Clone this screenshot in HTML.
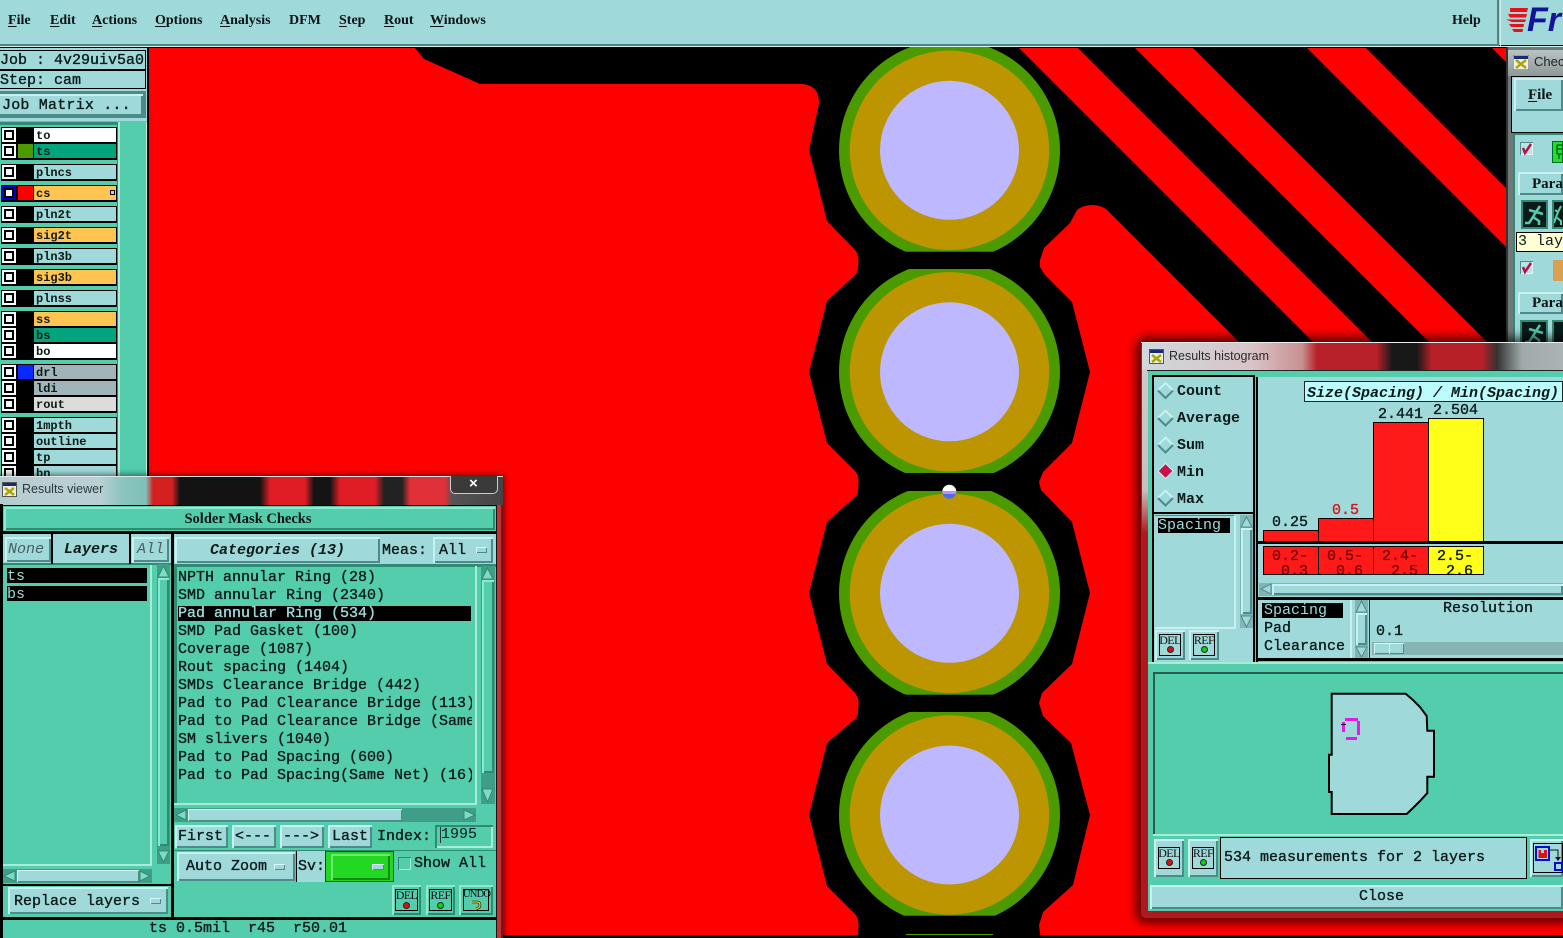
<!DOCTYPE html>
<html><head><meta charset="utf-8"><title>Solder Mask Checks</title>
<style>
*,*:after{box-sizing:border-box}
html,body{margin:0;padding:0;width:1563px;height:938px;overflow:hidden;background:#000}
div,span,svg.a{position:absolute}
.t{font:15px/16px "Liberation Mono",monospace;white-space:pre;color:#0a1a1a;-webkit-text-stroke:.35px currentColor;margin-top:1px}
.m{font:bold 14px/16px "Liberation Serif",serif;color:#0b1414;white-space:pre}
.m u{text-underline-offset:2px}
.s{font:bold 12px/14px "Liberation Mono",monospace;color:#0c1a14;white-space:pre;top:1px}
.b{background:#a0d9da;box-shadow:inset 2px 2px 0 #c8f2f1,inset -2px -2px 0 #4f8a8a}
.g{background:#54cdad;box-shadow:inset 2px 2px 0 #8fe8d0,inset -2px -2px 0 #2f8a72}
.l{background:#a0d9da}
.k{background:#000}
.r{left:1px;width:116px;height:16px;background:#000}
.c{left:1px;top:1px;width:14px;height:14px;background:#fff}
.c:after{content:"";position:absolute;left:2px;top:2px;width:10px;height:10px;border:2px solid #000;background:#f0f8f8}
.w{left:17px;top:0;width:15px;height:16px}
.n{left:33px;top:1px;width:82px;height:14px;background:#a0d9da;padding-left:2px;position:absolute}
.o{background:#ffc550}.v{background:#00a57e}.h{background:#fff}.y{background:#a0b4ba}.e{background:#dcdcdc}
.ib{font:12px/12px "Liberation Serif",serif;color:#111;text-align:center;letter-spacing:-.6px}
.dot{width:7px;height:7px;border-radius:50%;border:1px solid #222}
.f{border:1px solid #000}
</style></head><body>

<!-- PCB canvas -->
<svg class="a" style="left:0;top:0" width="1563" height="938" viewBox="0 0 1563 938">
<rect width="1563" height="938" fill="#000"/>
<path fill="#f00" d="M149 48L415 48L424 59L480 84L800 84Q819 84 819 103L809 150L827 221L855 250Q859 255 858.500 262L858 268Q858 272 855 275L827 301L809 372L827 443L855 471Q859 476 858.500 482L858 490Q858 494 855 497L827 522L809 593L827 664L855 693Q859 698 858.500 704L858 712Q858 716 855 719L827 743L809 815L827 886L855 914Q859 919 858.500 926L858 935L149 935Z"/>
<path fill="#f00" d="M1040 260L1044 248L1070 223L1077 210Q1083 205 1092 205Q1101 205 1107 210L1563 666L1563 935L1040 935L1039 925L1043 912L1073 885L1090 815L1071 743L1043 716L1039 703L1042 693L1072 664L1090 593L1072 522L1041 490L1039 482L1043 472L1072 443L1090 372L1072 302L1045 275L1040 267Z"/>
<path fill="#f00" d="M1019 48H1078L1507 477V536ZM1135 48H1193L1507 362V420ZM1307 48H1366L1507 189V248ZM1492 48H1507V63Z"/>
<g>
<circle cx="949.500" cy="150.300" r="110.500" fill="#4a9a00"/><circle cx="949.500" cy="371.800" r="110.500" fill="#4a9a00"/><circle cx="949.500" cy="593.300" r="110.500" fill="#4a9a00"/><circle cx="949.500" cy="815" r="110.500" fill="#4a9a00"/>
<rect x="895" y="251.700" width="110" height="17.300" fill="#000"/><rect x="895" y="473" width="110" height="18" fill="#000"/><rect x="895" y="694.700" width="110" height="17.300" fill="#000"/><rect x="895" y="915.700" width="110" height="19" fill="#000"/>
<circle cx="949.500" cy="150.300" r="99.700" fill="#bd9500"/><circle cx="949.500" cy="371.800" r="99.700" fill="#bd9500"/><circle cx="949.500" cy="593.300" r="99.700" fill="#bd9500"/><circle cx="949.500" cy="815" r="99.700" fill="#bd9500"/>
<circle cx="949.500" cy="150.300" r="69.500" fill="#bdb8ff"/><circle cx="949.500" cy="371.800" r="69.500" fill="#bdb8ff"/><circle cx="949.500" cy="593.300" r="69.500" fill="#bdb8ff"/><circle cx="949.500" cy="815" r="69.500" fill="#bdb8ff"/>
<rect x="906" y="934" width="87" height="1" fill="#4a9a00"/>
<rect x="0" y="935" width="1563" height="3" fill="#000"/>
</g>
<clipPath id="cur"><circle cx="949.300" cy="491.700" r="7"/></clipPath>
<g clip-path="url(#cur)"><rect x="940" y="484" width="20" height="7" fill="#fff"/><rect x="940" y="491" width="20" height="3" fill="#c58cf5"/><rect x="940" y="494" width="20" height="6" fill="#4a6cf0"/></g>
</svg>

<!-- Top bar -->
<div class="l" style="left:0;top:0;width:1563px;height:45px"></div>
<div style="left:0;top:44px;width:1498px;height:2px;background:#4d8484"></div>
<div style="left:0;top:46px;width:1563px;height:1px;background:#d0f0f0"></div>
<div style="left:1497px;top:0;width:2px;height:46px;background:#4d8484"></div>
<div style="left:1500px;top:0;width:1px;height:46px;background:#d0f0f0"></div>
<span class="m" style="left:8px;top:13px"><u>F</u>ile</span>
<span class="m" style="left:50px;top:13px"><u>E</u>dit</span>
<span class="m" style="left:92px;top:13px"><u>A</u>ctions</span>
<span class="m" style="left:155px;top:13px"><u>O</u>ptions</span>
<span class="m" style="left:220px;top:13px"><u>A</u>nalysis</span>
<span class="m" style="left:289px;top:13px">DFM</span>
<span class="m" style="left:339px;top:13px"><u>S</u>tep</span>
<span class="m" style="left:384px;top:13px"><u>R</u>out</span>
<span class="m" style="left:430px;top:13px"><u>W</u>indows</span>
<span class="m" style="left:1452px;top:13px">Help</span>
<svg class="a" style="left:1504px;top:6px" width="26" height="26"><g fill="#e8101a"><path d="M6 2H24L23 6H6ZM4 8H23L22 11.500H6ZM2 13.500H22L21 16H8ZM5 18H20L19.500 21H7ZM8 23H19L18.500 26H10Z"/></g></svg>
<span style="left:1527px;top:1px;font:italic bold 34px/38px 'Liberation Sans',sans-serif;color:#14149a;white-space:pre">Fr</span>

<!-- Left panel -->
<div class="l" style="left:0;top:48px;width:149px;height:430px"></div>
<div class="k" style="left:147px;top:48px;width:2px;height:430px"></div>
<div class="f l" style="left:-1px;top:50px;width:147px;height:20px"></div>
<div class="f l" style="left:-1px;top:70px;width:147px;height:19px"></div>
<span class="t" style="left:0;top:52px">Job : 4v29uiv5a0</span>
<span class="t" style="left:0;top:72px">Step: cam</span>
<div style="left:0;top:91px;width:146px;height:27px;background:#4d8a8a"></div>
<div class="b" style="left:-2px;top:94px;width:145px;height:22px"></div>
<span class="t" style="left:2px;top:97px;letter-spacing:.2px">Job Matrix ...</span>

<div style="left:0;top:121px;width:147px;height:360px;background:#54cdad"></div>
<div style="left:118px;top:122px;width:2px;height:355px;background:#a8ecd8"></div>
<div style="left:146px;top:122px;width:1px;height:355px;background:#c0f5e8"></div>
<div style="left:0;top:122px;width:118px;height:355px;background:#2f8a72"></div>
<div style="left:0;top:125px;width:117px;height:350px;background:#54cdad"></div>

<div class="r" style="top:127px"><i class="c" style="position:absolute"></i><div class="n h"><span class="s">to</span></div></div>
<div class="r" style="top:143px;height:17px"><i class="c" style="position:absolute"></i><div class="w" style="background:#4a9a00;top:1px;height:14px"></div><div class="n v"><span class="s">ts</span></div></div>
<div class="r" style="top:164px;height:17px"><i class="c" style="position:absolute"></i><div class="n"><span class="s">plncs</span></div></div>
<div class="r" style="top:185px;height:17px"><i class="c" style="position:absolute;background:#0000c8"></i><div class="w" style="background:#f00;top:1px;height:14px"></div><div class="n o"><span class="s">cs</span><span style="left:76px;top:4px;width:5px;height:5px;border:1px solid #000;background:#ccc"></span></div></div>
<div class="r" style="top:206px;height:17px"><i class="c" style="position:absolute"></i><div class="n"><span class="s">pln2t</span></div></div>
<div class="r" style="top:227px;height:17px"><i class="c" style="position:absolute"></i><div class="n o"><span class="s">sig2t</span></div></div>
<div class="r" style="top:248px;height:17px"><i class="c" style="position:absolute"></i><div class="n"><span class="s">pln3b</span></div></div>
<div class="r" style="top:269px;height:17px"><i class="c" style="position:absolute"></i><div class="n o"><span class="s">sig3b</span></div></div>
<div class="r" style="top:290px;height:17px"><i class="c" style="position:absolute"></i><div class="n"><span class="s">plnss</span></div></div>
<div class="r" style="top:311px;height:17px"><i class="c" style="position:absolute"></i><div class="n o"><span class="s">ss</span></div></div>
<div class="r" style="top:327px;height:17px"><i class="c" style="position:absolute"></i><div class="n v"><span class="s">bs</span></div></div>
<div class="r" style="top:343px;height:17px"><i class="c" style="position:absolute"></i><div class="n h"><span class="s">bo</span></div></div>
<div class="r" style="top:364px;height:17px"><i class="c" style="position:absolute"></i><div class="w" style="background:#0a28ff;top:1px;height:14px"></div><div class="n y"><span class="s">drl</span></div></div>
<div class="r" style="top:380px;height:17px"><i class="c" style="position:absolute"></i><div class="n y"><span class="s">ldi</span></div></div>
<div class="r" style="top:396px;height:17px"><i class="c" style="position:absolute"></i><div class="n e"><span class="s">rout</span></div></div>
<div class="r" style="top:417px;height:17px"><i class="c" style="position:absolute"></i><div class="n"><span class="s">1mpth</span></div></div>
<div class="r" style="top:433px;height:17px"><i class="c" style="position:absolute"></i><div class="n"><span class="s">outline</span></div></div>
<div class="r" style="top:449px;height:17px"><i class="c" style="position:absolute"></i><div class="n"><span class="s">tp</span></div></div>
<div class="r" style="top:465px;height:17px"><i class="c" style="position:absolute"></i><div class="n"><span class="s">bn</span></div></div>

<!-- Check window (right edge) -->
<div style="left:1506px;top:47px;width:57px;height:296px;background:#6e7a7a"></div>
<div style="left:1506px;top:47px;width:2px;height:296px;background:#333"></div>
<div style="left:1508px;top:50px;width:55px;height:26px;background:linear-gradient(#b9c3c3,#8d9999)"></div>
<svg class="a" style="left:1513px;top:55px" width="16" height="15"><rect width="16" height="15" fill="#eee" stroke="#555"/><rect x="1" y="1" width="14" height="3" fill="#1a2a7a"/><path d="M3 5L13 13M13 5L3 13" stroke="#a8a800" stroke-width="2.500"/></svg>
<span style="left:1534px;top:53px;font:13px/17px 'Liberation Sans',sans-serif;color:#222">Chec</span>
<div class="k" style="left:1511px;top:76px;width:52px;height:57px"></div>
<div class="l" style="left:1512px;top:77px;width:51px;height:55px"></div>
<div class="b" style="left:1514px;top:78px;width:49px;height:33px"></div>
<span class="m" style="left:1528px;top:87px;font-size:15px"><u>F</u>ile</span>
<div style="left:1513px;top:133px;width:50px;height:210px;background:#a0d9da"></div>
<div style="left:1513px;top:133px;width:2px;height:210px;background:#2f8a72"></div>
<div style="left:1513px;top:133px;width:50px;height:2px;background:#2f8a72"></div>
<div class="b" style="left:1520px;top:142px;width:13px;height:13px;background:#b8e6e6;box-shadow:inset 1px 1px 0 #4f8a8a,inset -1px -1px 0 #e0f8f8"></div>
<svg class="a" style="left:1520px;top:142px" width="14" height="14"><path d="M3 6L5 11L11 2" stroke="#b8104c" stroke-width="2.500" fill="none"/></svg>
<div style="left:1552px;top:141px;width:11px;height:22px;background:#22e022;border:1px solid #063"></div>
<svg class="a" style="left:1553px;top:142px" width="10" height="20"><path d="M4 3H9M4 3V12M4 7H9M4 12H9M6 12V17" stroke="#063" stroke-width="1.500" fill="none"/></svg>
<div class="b" style="left:1518px;top:172px;width:45px;height:23px"></div>
<span class="m" style="left:1532px;top:176px;font-size:15px">Paran</span>
<div style="left:1521px;top:200px;width:27px;height:29px;background:#0a1a1a;border:2px solid #2f8a72"></div>
<div style="left:1552px;top:200px;width:11px;height:29px;background:#0a1a1a;border:2px solid #2f8a72;border-right:0"></div>
<svg class="a" style="left:1523px;top:203px" width="24" height="24"><path d="M17 3L13 9L6 7M13 9L10 14L16 18L16 22M10 14L6 20H2M13 9L20 11" stroke="#54cdad" stroke-width="2.500" fill="none"/></svg>
<svg class="a" style="left:1554px;top:203px" width="9" height="24"><path d="M7 3L4 9L1 7M4 9L2 14L7 18L7 22M2 14L0 20" stroke="#54cdad" stroke-width="2" fill="none"/></svg>
<div style="left:1516px;top:232px;width:47px;height:20px;background:#ffffd4;border:1px solid #000;border-right:0"></div>
<span class="t" style="left:1518px;top:233px;-webkit-text-stroke:0">3 lay</span>
<div class="b" style="left:1520px;top:261px;width:13px;height:13px;background:#b8e6e6;box-shadow:inset 1px 1px 0 #4f8a8a,inset -1px -1px 0 #e0f8f8"></div>
<svg class="a" style="left:1520px;top:261px" width="14" height="14"><path d="M3 6L5 11L11 2" stroke="#b8104c" stroke-width="2.500" fill="none"/></svg>
<div style="left:1553px;top:260px;width:10px;height:21px;background:#d8a050"></div>
<div class="b" style="left:1518px;top:292px;width:45px;height:22px"></div>
<span class="m" style="left:1532px;top:295px;font-size:15px">Paran</span>
<div style="left:1520px;top:320px;width:28px;height:24px;background:#0a1a1a;border:2px solid #2f8a72"></div>
<div style="left:1552px;top:320px;width:11px;height:24px;background:#0a1a1a;border:2px solid #2f8a72;border-right:0"></div>
<svg class="a" style="left:1523px;top:322px" width="24" height="21"><path d="M17 3L13 9L6 7M13 9L10 14L16 18L16 22M10 14L6 20H2M13 9L20 11" stroke="#54cdad" stroke-width="2.500" fill="none"/></svg>

<!-- Results viewer window -->
<div style="left:0;top:476px;width:503px;height:462px;background:#111;box-shadow:0 0 6px 1px rgba(0,0,0,.6)"></div>
<div style="left:0;top:477px;width:503px;height:28px;background:linear-gradient(90deg,#b7ccd0 0,#b8d0d4 100px,#8cc4c0 122px,#7fc0b8 146px,#d42020 153px,#d42020 172px,#131313 180px,#131313 260px,#e01c24 270px,#e01c24 305px,#141414 314px,#141414 330px,#e01c24 340px,#e01c24 375px,#222 384px,#222 402px,#e03038 410px,#e03038 445px,#555 452px,#444 503px)"></div>
<div style="left:0;top:476px;width:503px;height:1px;background:#dfe8e8"></div>
<div style="left:450px;top:476px;width:48px;height:18px;border:1px solid #ccc;border-top:0;border-radius:0 0 5px 5px;background:#3a3a3a"></div>
<span style="left:469px;top:476px;font:bold 15px/16px 'Liberation Sans',sans-serif;color:#fff">×</span>
<svg class="a" style="left:2px;top:482px" width="15" height="15"><rect x=".5" y=".5" width="14" height="14" fill="#eee" stroke="#555"/><rect x="1" y="1" width="13" height="3" fill="#1a2a7a"/><path d="M3 6L12 13M12 6L3 13" stroke="#a8a800" stroke-width="2.500"/></svg>
<span style="left:22px;top:481px;font:12.5px/16px 'Liberation Sans',sans-serif;color:#2a3a3a">Results viewer</span>
<div style="left:497px;top:505px;width:6px;height:433px;background:#c43038"></div>
<div style="left:496px;top:505px;width:1px;height:433px;background:#111"></div>
<div style="left:501px;top:505px;width:2px;height:433px;background:#701818"></div>

<div style="left:0;top:505px;width:496px;height:433px;background:#54cdad"></div>
<div class="k" style="left:0;top:505px;width:496px;height:1px"></div>
<div class="g" style="left:4px;top:507px;width:491px;height:23px"></div>
<span class="m" style="left:4px;top:511px;width:491px;text-align:center;font-size:14.500px;margin-top:0;padding-right:3px">Solder Mask Checks</span>
<div class="k" style="left:0;top:531px;width:496px;height:3px"></div>
<div class="l" style="left:3px;top:534px;width:493px;height:30px"></div>

<div class="k" style="left:171px;top:534px;width:3px;height:384px"></div>
<div class="k" style="left:0;top:504px;width:3px;height:434px"></div>
<div style="left:3px;top:564px;width:168px;height:320px;background:#54cdad"></div>
<div style="left:3px;top:563px;width:168px;height:2px;background:#2f8a72"></div>
<div class="k" style="left:51px;top:534px;width:2px;height:30px"></div>
<div class="k" style="left:129px;top:534px;width:2px;height:30px"></div>
<div class="b" style="left:5px;top:537px;width:46px;height:25px"></div>
<span class="t" style="left:8px;top:541px;font-style:italic;color:#4a6060;-webkit-text-stroke:0">None</span>
<span class="t" style="left:64px;top:541px;font-weight:bold;font-style:italic;-webkit-text-stroke:0">Layers</span>
<div class="b" style="left:132px;top:537px;width:37px;height:25px"></div>
<span class="t" style="left:137px;top:541px;font-style:italic;color:#4a6060;-webkit-text-stroke:0">All</span>
<div class="b" style="left:175px;top:537px;width:205px;height:26px"></div>
<span class="t" style="left:210px;top:542px;font-weight:bold;font-style:italic;-webkit-text-stroke:0">Categories (13)</span>
<span class="t" style="left:382px;top:542px">Meas:</span>
<div class="b" style="left:433px;top:537px;width:60px;height:26px"></div>
<span class="t" style="left:439px;top:542px">All</span>
<div style="left:476px;top:547px;width:11px;height:6px;background:#a0d9da;box-shadow:inset 1px 1px 0 #d8f8f8,inset -1px -1px 0 #4f8a8a"></div>

<!-- layers list -->
<div style="left:150px;top:565px;width:2px;height:301px;background:#a8ecd8"></div>
<div style="left:3px;top:864px;width:149px;height:2px;background:#a8ecd8"></div>
<div class="k" style="left:7px;top:568px;width:140px;height:15px"></div>
<div class="k" style="left:7px;top:586px;width:140px;height:15px"></div>
<span class="t" style="left:7px;top:568px;color:#a0d9da;-webkit-text-stroke:0">ts</span>
<span class="t" style="left:7px;top:586px;color:#a0d9da;-webkit-text-stroke:0">bs</span>
<div style="left:157px;top:564px;width:13px;height:300px;background:#3f9e88"></div>
<div class="g" style="left:158px;top:578px;width:11px;height:268px"></div>
<div style="left:3px;top:869px;width:149px;height:14px;background:#3f9e88"></div>
<div style="left:17px;top:870px;width:122px;height:12px;background:#a0d9da;box-shadow:inset 1px 1px 0 #d8f8f8,inset -1px -1px 0 #4f8a8a"></div>
<div class="k" style="left:0;top:884px;width:172px;height:2px"></div>
<div class="b" style="left:8px;top:887px;width:160px;height:27px"></div>
<span class="t" style="left:14px;top:893px">Replace layers</span>
<div style="left:150px;top:898px;width:11px;height:6px;background:#a0d9da;box-shadow:inset 1px 1px 0 #d8f8f8,inset -1px -1px 0 #4f8a8a"></div>

<!-- categories list -->
<div style="left:174px;top:564px;width:322px;height:3px;background:#2f8a72"></div>
<div style="left:174px;top:564px;width:3px;height:241px;background:#2f8a72"></div>
<div style="left:475px;top:566px;width:2px;height:239px;background:#a8ecd8"></div>
<div style="left:174px;top:803px;width:303px;height:2px;background:#a8ecd8"></div>
<div class="k" style="left:178px;top:606px;width:293px;height:15px"></div>
<div style="left:178px;top:569px;width:294px;height:230px;overflow:hidden">
<span class="t" style="left:0;top:0">NPTH annular Ring (28)</span>
<span class="t" style="left:0;top:18px">SMD annular Ring (2340)</span>
<span class="t" style="left:0;top:36px;color:#a0d9da">Pad annular Ring (534)</span>
<span class="t" style="left:0;top:54px">SMD Pad Gasket (100)</span>
<span class="t" style="left:0;top:72px">Coverage (1087)</span>
<span class="t" style="left:0;top:90px">Rout spacing (1404)</span>
<span class="t" style="left:0;top:108px">SMDs Clearance Bridge (442)</span>
<span class="t" style="left:0;top:126px">Pad to Pad Clearance Bridge (113)</span>
<span class="t" style="left:0;top:144px">Pad to Pad Clearance Bridge (Same Net)</span>
<span class="t" style="left:0;top:162px">SM slivers (1040)</span>
<span class="t" style="left:0;top:180px">Pad to Pad Spacing (600)</span>
<span class="t" style="left:0;top:198px">Pad to Pad Spacing(Same Net) (16)</span>
</div>
<div style="left:481px;top:566px;width:14px;height:238px;background:#3f9e88"></div>
<div class="g" style="left:482px;top:580px;width:12px;height:193px"></div>
<div style="left:174px;top:808px;width:302px;height:14px;background:#3f9e88"></div>
<div style="left:188px;top:809px;width:214px;height:12px;background:#a0d9da;box-shadow:inset 1px 1px 0 #d8f8f8,inset -1px -1px 0 #4f8a8a"></div>

<div class="b" style="left:175px;top:825px;width:53px;height:23px"></div>
<span class="t" style="left:178px;top:828px">First</span>
<div class="b" style="left:232px;top:825px;width:44px;height:23px"></div>
<span class="t" style="left:235px;top:828px">&lt;---</span>
<div class="b" style="left:280px;top:825px;width:44px;height:23px"></div>
<span class="t" style="left:283px;top:828px">---&gt;</span>
<div class="b" style="left:328px;top:825px;width:44px;height:23px"></div>
<span class="t" style="left:332px;top:828px">Last</span>
<span class="t" style="left:377px;top:828px">Index:</span>
<div style="left:435px;top:825px;width:58px;height:23px;box-shadow:inset 2px 2px 0 #2f8a72,inset -2px -2px 0 #a8ecd8"></div>
<span class="t" style="left:441px;top:826px;-webkit-text-stroke:0">1995</span>
<div style="left:440px;top:827px;width:1px;height:16px;background:#333"></div>
<div style="left:174px;top:850px;width:322px;height:1px;background:#2f8a72"></div>
<div class="b" style="left:177px;top:852px;width:118px;height:29px"></div>
<span class="t" style="left:186px;top:858px">Auto Zoom</span>
<div style="left:274px;top:864px;width:11px;height:6px;background:#a0d9da;box-shadow:inset 1px 1px 0 #d8f8f8,inset -1px -1px 0 #4f8a8a"></div>
<div class="k" style="left:296px;top:851px;width:1px;height:31px"></div>
<div class="l" style="left:297px;top:851px;width:29px;height:31px"></div>
<span class="t" style="left:298px;top:858px">Sv:</span>
<div style="left:325px;top:851px;width:69px;height:31px;background:#22d822;border:1px solid #053"></div>
<div style="left:331px;top:854px;width:59px;height:26px;background:#22d822;box-shadow:inset 2px 2px 0 #70e870,inset -2px -2px 0 #158a15"></div>
<div style="left:372px;top:864px;width:12px;height:6px;background:#a0d9da;box-shadow:inset 1px 1px 0 #d8f8f8,inset -1px -1px 0 #4f8a8a"></div>
<div style="left:398px;top:857px;width:13px;height:13px;box-shadow:inset 1px 1px 0 #2f8a72,inset -1px -1px 0 #a8ecd8"></div>
<span class="t" style="left:414px;top:855px">Show All</span>
<div class="g" style="left:392px;top:885px;width:29px;height:30px"></div>
<div class="f" style="left:395px;top:889px;width:23px;height:22px"></div>
<span class="ib" style="left:395px;top:889px;width:23px">DEL</span>
<div class="dot" style="left:403px;top:902px;background:#e01010"></div>
<div class="g" style="left:426px;top:885px;width:29px;height:30px"></div>
<div class="f" style="left:429px;top:889px;width:23px;height:22px"></div>
<span class="ib" style="left:429px;top:889px;width:23px">REF</span>
<div class="dot" style="left:437px;top:902px;background:#10d010"></div>
<div class="g" style="left:459px;top:885px;width:34px;height:30px"></div>
<div class="f" style="left:463px;top:889px;width:26px;height:22px"></div>
<span class="ib" style="left:463px;top:889px;width:26px;font-size:10.500px;letter-spacing:-.8px">UNDO</span>
<svg class="a" style="left:470px;top:899px" width="12" height="12"><path d="M2 3H7Q10 3 10 6T6 10" stroke="#111" stroke-width="2.500" fill="none"/><path d="M2 3H7Q10 3 10 6T6 10" stroke="#f0e020" stroke-width="1.200" fill="none"/></svg>
<div class="k" style="left:0;top:917px;width:496px;height:3px"></div>
<span class="t" style="left:149px;top:920px">ts 0.5mil  r45  r50.01</span>

<!-- Results histogram window -->
<div style="left:1141px;top:342px;width:422px;height:576px;background:#b21a22;border-radius:5px 0 0 5px;box-shadow:0 0 10px 5px rgba(0,0,0,.65)"></div>
<div style="left:1142px;top:343px;width:421px;height:27px;background:linear-gradient(90deg,#cfd8dc 0,#d8c4c8 110px,#c89090 160px,#b8202a 175px,#b8202a 235px,#181818 250px,#181818 275px,#b82028 290px,#b82028 340px,#333 355px,#a0aaaa 380px,#aab4b4 421px)"></div>
<div style="left:1141px;top:342px;width:422px;height:1px;background:#e8eeee"></div>
<div style="left:1142px;top:370px;width:6px;height:545px;background:linear-gradient(#d0c8c8,#c8c0c0 22%,#b01820 30%,#b01820)"></div>
<svg class="a" style="left:1149px;top:349px" width="15" height="15"><rect x=".5" y=".5" width="14" height="14" fill="#eee" stroke="#555"/><rect x="1" y="1" width="13" height="3" fill="#1a2a7a"/><path d="M3 6L12 13M12 6L3 13" stroke="#a8a800" stroke-width="2.500"/></svg>
<span style="left:1169px;top:348px;font:12.5px/16px 'Liberation Sans',sans-serif;color:#2a2a2a">Results histogram</span>
<div style="left:1148px;top:371px;width:415px;height:540px;background:#54cdad"></div>
<div style="left:1147px;top:370px;width:416px;height:1px;background:#222"></div>

<!-- radios -->
<div class="k" style="left:1152px;top:375px;width:103px;height:288px"></div>
<div class="l" style="left:1154px;top:377px;width:99px;height:135px"></div>
<div class="l" style="left:1154px;top:514px;width:99px;height:148px"></div>
<span class="t" style="left:1177px;top:383px;font-weight:bold;-webkit-text-stroke:0">Count</span>
<span class="t" style="left:1177px;top:410px;font-weight:bold;-webkit-text-stroke:0">Average</span>
<span class="t" style="left:1177px;top:437px;font-weight:bold;-webkit-text-stroke:0">Sum</span>
<span class="t" style="left:1177px;top:464px;font-weight:bold;-webkit-text-stroke:0">Min</span>
<span class="t" style="left:1177px;top:491px;font-weight:bold;-webkit-text-stroke:0">Max</span>
<svg class="a" style="left:1156px;top:380px" width="20" height="128">
<g fill="none" stroke-width="2">
<path d="M2 10.500L9.500 3L17 10.500" stroke="#c8f2f1"/><path d="M2 10.500L9.500 18L17 10.500" stroke="#4f8a8a"/>
<path d="M2 38L9.500 30.500L17 38" stroke="#c8f2f1"/><path d="M2 38L9.500 45.500L17 38" stroke="#4f8a8a"/>
<path d="M2 65L9.500 57.500L17 65" stroke="#c8f2f1"/><path d="M2 65L9.500 72.500L17 65" stroke="#4f8a8a"/>
<path d="M2 118L9.500 110.500L17 118" stroke="#c8f2f1"/><path d="M2 118L9.500 125.500L17 118" stroke="#4f8a8a"/>
</g>
<path d="M2 91L9.500 83.500L17 91L9.500 98.500Z" fill="#c8104c" stroke="#c8f2f1"/>
</svg>
<div style="left:1234px;top:516px;width:2px;height:112px;background:#c8f2f1"></div>
<div style="left:1155px;top:627px;width:81px;height:2px;background:#c8f2f1"></div>
<div style="left:1155px;top:515px;width:79px;height:1px;background:#4f8a8a"></div>
<div class="k" style="left:1158px;top:518px;width:72px;height:15px"></div>
<span class="t" style="left:1158px;top:517px;color:#a0d9da;-webkit-text-stroke:0">Spacing</span>
<div style="left:1240px;top:515px;width:13px;height:113px;background:#7fb5b5"></div>
<div class="b" style="left:1241px;top:528px;width:11px;height:86px"></div>
<div class="b" style="left:1155px;top:630px;width:30px;height:30px"></div>
<div class="f" style="left:1159px;top:634px;width:22px;height:22px"></div>
<span class="ib" style="left:1159px;top:634px;width:22px">DEL</span>
<div class="dot" style="left:1167px;top:646px;background:#e01010"></div>
<div class="b" style="left:1189px;top:630px;width:30px;height:30px"></div>
<div class="f" style="left:1193px;top:634px;width:22px;height:22px"></div>
<span class="ib" style="left:1193px;top:634px;width:22px">REF</span>
<div class="dot" style="left:1201px;top:646px;background:#10d010"></div>

<!-- chart -->
<div class="l" style="left:1257px;top:377px;width:306px;height:283px"></div>
<div style="left:1304px;top:381px;width:259px;height:21px;background:#bcfcfd;border:1px solid #222"></div>
<span class="t" style="left:1307px;top:385px;font-style:italic;font-weight:bold;-webkit-text-stroke:0">Size(Spacing) / Min(Spacing)</span>
<span class="t" style="left:1272px;top:514px">0.25</span>
<span class="t" style="left:1332px;top:502px;color:#d01818">0.5</span>
<span class="t" style="left:1378px;top:406px">2.441</span>
<span class="t" style="left:1433px;top:402px">2.504</span>
<div class="f" style="left:1263px;top:530px;width:56px;height:12px;background:#ff1a1a"></div>
<div class="f" style="left:1318px;top:518px;width:56px;height:24px;background:#ff1a1a"></div>
<div class="f" style="left:1373px;top:422px;width:56px;height:120px;background:#ff1a1a"></div>
<div class="f" style="left:1428px;top:418px;width:56px;height:124px;background:#ffff1a"></div>
<div class="k" style="left:1258px;top:541px;width:305px;height:3px"></div>
<div class="f" style="left:1263px;top:546px;width:56px;height:29px;background:#ff1a1a;overflow:hidden"><span class="t" style="left:8px;top:1px;color:#7a0000">0.2-</span><span class="t" style="left:17px;top:16px;color:#7a0000">0.3</span></div>
<div class="f" style="left:1318px;top:546px;width:56px;height:29px;background:#ff1a1a;overflow:hidden"><span class="t" style="left:8px;top:1px;color:#7a0000">0.5-</span><span class="t" style="left:17px;top:16px;color:#7a0000">0.6</span></div>
<div class="f" style="left:1373px;top:546px;width:56px;height:29px;background:#ff1a1a;overflow:hidden"><span class="t" style="left:8px;top:1px;color:#7a0000">2.4-</span><span class="t" style="left:17px;top:16px;color:#7a0000">2.5</span></div>
<div class="f" style="left:1428px;top:546px;width:56px;height:29px;background:#ffff1a;overflow:hidden"><span class="t" style="left:8px;top:1px">2.5-</span><span class="t" style="left:17px;top:16px">2.6</span></div>
<div style="left:1259px;top:583px;width:304px;height:13px;background:#7fb5b5"></div>
<div class="b" style="left:1272px;top:584px;width:291px;height:11px"></div>
<div class="k" style="left:1258px;top:597px;width:305px;height:3px"></div>
<div class="k" style="left:1256px;top:377px;width:2px;height:285px"></div>
<div style="left:1350px;top:600px;width:2px;height:58px;background:#c8f2f1"></div>
<div class="k" style="left:1258px;top:658px;width:305px;height:3px"></div>
<div class="k" style="left:1262px;top:603px;width:81px;height:15px"></div>
<span class="t" style="left:1264px;top:602px;color:#a0d9da;-webkit-text-stroke:0">Spacing</span>
<span class="t" style="left:1264px;top:620px">Pad</span>
<span class="t" style="left:1264px;top:638px">Clearance</span>
<div style="left:1355px;top:600px;width:13px;height:58px;background:#7fb5b5"></div>
<div class="b" style="left:1356px;top:613px;width:11px;height:32px"></div>
<div style="left:1369px;top:600px;width:1px;height:58px;background:#333"></div>
<span class="t" style="left:1443px;top:600px">Resolution</span>
<span class="t" style="left:1376px;top:623px">0.1</span>
<div style="left:1372px;top:642px;width:191px;height:13px;background:#85b5b5"></div>
<div class="b" style="left:1374px;top:643px;width:16px;height:11px;box-shadow:inset 1px 1px 0 #d8f8f8,inset -1px -1px 0 #4f8a8a"></div>
<div class="b" style="left:1389px;top:643px;width:15px;height:11px;box-shadow:inset 1px 1px 0 #d8f8f8,inset -1px -1px 0 #4f8a8a"></div>

<!-- preview -->
<div style="left:1148px;top:662px;width:415px;height:2px;background:#a8ecd8"></div>
<div style="left:1153px;top:672px;width:410px;height:2px;background:#2a5a50"></div>
<div style="left:1153px;top:672px;width:2px;height:164px;background:#2a5a50"></div>
<div style="left:1153px;top:834px;width:410px;height:2px;background:#a8ecd8"></div>
<svg class="a" style="left:1320px;top:685px" width="125" height="140">
<path d="M11.700 8.700H85.700L93 15L100 22L106.700 31L107.300 45.700H114V91.700H107.300V108L100 116L93 123L86.700 129H11.700V107H9V69.700H11.700Z" fill="#a0d9da" stroke="#000" stroke-width="2"/>
<path d="M25 33H38V36H25ZM37 36H40V50H37ZM26 52H37V55H26ZM22 37H25V47H22Z" fill="#e818e8"/>
<rect x="21" y="39" width="5" height="1" fill="#111"/>
</svg>

<!-- bottom row -->
<div class="b" style="left:1154px;top:839px;width:30px;height:38px"></div>
<div class="f" style="left:1158px;top:847px;width:22px;height:22px"></div>
<span class="ib" style="left:1158px;top:847px;width:22px">DEL</span>
<div class="dot" style="left:1166px;top:859px;background:#e01010"></div>
<div class="b" style="left:1188px;top:839px;width:30px;height:38px"></div>
<div class="f" style="left:1192px;top:847px;width:22px;height:22px"></div>
<span class="ib" style="left:1192px;top:847px;width:22px">REF</span>
<div class="dot" style="left:1200px;top:859px;background:#10d010"></div>
<div class="f l" style="left:1220px;top:837px;width:307px;height:42px"></div>
<span class="t" style="left:1224px;top:849px">534 measurements for 2 layers</span>
<div class="b" style="left:1530px;top:839px;width:33px;height:38px"></div>
<div class="f" style="left:1533px;top:843px;width:30px;height:30px"></div>
<svg class="a" style="left:1534px;top:844px" width="29" height="29">
<rect x="2" y="3" width="13" height="13" fill="#a0d9da" stroke="#0a0ad0" stroke-width="2"/><path d="M4.500 6H7V9H10V6H13V14H4.500Z" fill="#e01010"/>
<rect x="21" y="19" width="7" height="7" fill="#a0d9da" stroke="#0a0ad0" stroke-width="2"/><path d="M16 6H24V14" stroke="#111" fill="none"/><path d="M21 13H27L24 17Z" fill="#111"/>
</svg>
<div class="b" style="left:1150px;top:885px;width:413px;height:24px"></div>
<span class="t" style="left:1359px;top:888px">Close</span>
<div style="left:1148px;top:911px;width:415px;height:5px;background:#b01820"></div>

<!-- scroll arrows overlay -->
<svg class="a" style="left:0;top:0;pointer-events:none" width="1563" height="938">
<g fill="#7fdcc4" stroke="#2f8a72">
<path d="M163.500 566L158 577H169Z"/><path d="M163.500 862L158 851H169Z"/>
<path d="M4 876L15 871V881Z"/><path d="M150 876L140 871V881Z"/>
<path d="M487.500 568L482 579H493Z"/><path d="M487.500 802L482 789H493Z"/>
<path d="M176 815L186 810V820Z"/><path d="M475 815L464 810V820Z"/>
</g>
<g fill="#a0d9da" stroke="#4f8a8a">
<path d="M1246.500 517L1241 527H1252Z"/><path d="M1246.500 627L1241 616H1252Z"/>
<path d="M1261 589L1271 584V594Z"/>
<path d="M1361.500 601L1356 612H1367Z"/><path d="M1361.500 657L1356 647H1367Z"/>
</g>
</svg>
</body></html>
